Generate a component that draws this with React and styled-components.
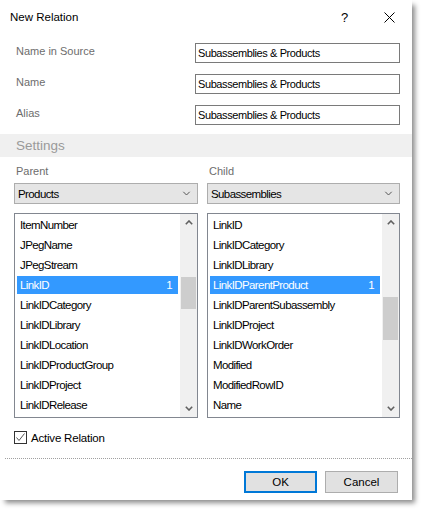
import React from 'react';
import styled, { createGlobalStyle } from 'styled-components';

const GlobalStyle = createGlobalStyle`
  body {
    margin: 0;
    background: #ffffff;
    font-family: "Liberation Sans", Arial, sans-serif;
  }
`;

// the dialog uses a narrow UI face for its controls
const controlFont = `
  font-family: "Liberation Sans", Arial, sans-serif;
  font-size: 11.5px;
  letter-spacing: -0.6px;
`;

const Page = styled.div`
  width: 421px;
  height: 509px;
  overflow: hidden;
`;

const Window = styled.div`
  width: 412px;
  height: 500px;
  background: #ffffff;
  box-shadow: 4px 4px 5px -1px rgba(0, 0, 0, 0.45);
  display: flex;
  flex-direction: column;
`;

const TitleBar = styled.div`
  height: 34px;
  display: flex;
  align-items: center;
  padding-left: 10px;
`;

const Title = styled.div`
  flex: 1;
  font-size: 11.5px;
  color: #000;
`;

const CaptionButton = styled.div`
  width: 45px;
  height: 34px;
  display: flex;
  align-items: center;
  justify-content: center;
  font-size: 13px;
  color: #000;
`;

const Fields = styled.div`
  display: grid;
  grid-template-columns: 179px 205px;
  row-gap: 11px;
  padding: 9px 0 0 16px;
`;

const FieldLabel = styled.div`
  height: 20px;
  line-height: 17px;
  font-size: 11px;
  color: #6d6d6d;
`;

const TextBox = styled.div`
  height: 20px;
  box-sizing: border-box;
  border: 1px solid #7a7a7a;
  padding: 0 2px;
  line-height: 18px;
  ${controlFont}
  font-size: 11px;
  letter-spacing: -0.4px;
  color: #000;
`;

const SettingsBand = styled.div`
  margin-top: 9px;
  height: 23px;
  background: #f0f0f0;
  padding-left: 16px;
  line-height: 23px;
  font-size: 13.5px;
  color: #9a9a9a;
`;

const Columns = styled.div`
  display: flex;
  gap: 9px;
  padding: 5px 0 0 14px;
`;

const Column = styled.div`
  width: ${(p) => p.width}px;
  display: flex;
  flex-direction: column;
`;

const ColumnLabel = styled.div`
  height: 18px;
  line-height: 18px;
  padding-left: 2px;
  font-size: 11px;
  color: #6d6d6d;
`;

const Select = styled.div`
  margin-top: 3px;
  height: 21px;
  box-sizing: border-box;
  border: 1px solid #adadad;
  background: #e5e5e5;
  display: flex;
  align-items: center;
  padding: 0 6px 0 3px;
  ${controlFont}
  color: #000;
`;

const SelectText = styled.span`
  flex: 1;
`;

const ListBox = styled.div`
  margin-top: 9px;
  height: 205px;
  box-sizing: border-box;
  border: 1px solid #828790;
  display: flex;
  overflow: hidden;
`;

const Items = styled.div`
  flex: 1;
  padding: 2px 2px 0 2px;
`;

const Item = styled.div`
  height: 18px;
  margin-bottom: 2px;
  display: flex;
  align-items: center;
  padding: 0 6px 0 3px;
  ${controlFont}
  color: ${(p) => (p.selected ? '#ffffff' : '#000000')};
  background: ${(p) => (p.selected ? '#3399ff' : 'transparent')};
`;

const ItemName = styled.span`
  flex: 1;
  white-space: nowrap;
`;

const ScrollBar = styled.div`
  width: 17px;
  background: #f0f0f0;
  display: flex;
  flex-direction: column;
`;

const ScrollArrow = styled.div`
  height: 17px;
  display: flex;
  align-items: center;
  justify-content: center;
`;

const Track = styled.div`
  flex: 1;
  display: flex;
  justify-content: center;
`;

const Thumb = styled.div`
  width: 15px;
  background: #cdcdcd;
`;

const CheckRow = styled.div`
  margin: 13px 0 0 14px;
  height: 13px;
  display: flex;
  align-items: center;
  gap: 4px;
  font-size: 11.5px;
  letter-spacing: -0.2px;
  color: #000;
`;

const CheckBox = styled.div`
  width: 13px;
  height: 13px;
  box-sizing: border-box;
  border: 1px solid #333333;
  background: #fff;
  display: flex;
  align-items: center;
  justify-content: center;
`;

const Divider = styled.div`
  margin: 14px 0 0 5px;
  border-top: 1px dotted #a0a0a0;
`;

const ButtonRow = styled.div`
  display: flex;
  justify-content: flex-end;
  gap: 8px;
  padding: 12px 14px 0 0;
`;

const Button = styled.div`
  width: 73px;
  height: 22px;
  box-sizing: border-box;
  background: #e1e1e1;
  border: ${(p) => (p.primary ? '2px solid #0078d7' : '1px solid #adadad')};
  display: flex;
  align-items: center;
  justify-content: center;
  font-size: 11.5px;
  color: #000;
`;

const Chevron = ({ up, color = '#606060', w = 8, h = 5, sw = 1.6 }) => (
  <svg width={w} height={h} viewBox="0 0 8 5">
    <polyline
      points={up ? '0.8,4.2 4,1 7.2,4.2' : '0.8,0.8 4,4 7.2,0.8'}
      fill="none"
      stroke={color}
      strokeWidth={sw}
    />
  </svg>
);

const parentItems = [
  'ItemNumber',
  'JPegName',
  'JPegStream',
  'LinkID',
  'LinkIDCategory',
  'LinkIDLibrary',
  'LinkIDLocation',
  'LinkIDProductGroup',
  'LinkIDProject',
  'LinkIDRelease',
];

const childItems = [
  'LinkID',
  'LinkIDCategory',
  'LinkIDLibrary',
  'LinkIDParentProduct',
  'LinkIDParentSubassembly',
  'LinkIDProject',
  'LinkIDWorkOrder',
  'Modified',
  'ModifiedRowID',
  'Name',
];

const FieldList = ({ items, selected, thumbTop, thumbHeight }) => (
  <ListBox>
    <Items>
      {items.map((name, i) => (
        <Item key={name} selected={i === selected}>
          <ItemName>{name}</ItemName>
          {i === selected && <span>1</span>}
        </Item>
      ))}
    </Items>
    <ScrollBar>
      <ScrollArrow>
        <Chevron up />
      </ScrollArrow>
      <Track>
        <Thumb style={{ marginTop: thumbTop, height: thumbHeight }} />
      </Track>
      <ScrollArrow>
        <Chevron />
      </ScrollArrow>
    </ScrollBar>
  </ListBox>
);

const fields = ['Name in Source', 'Name', 'Alias'];

export default function App() {
  return (
    <Page>
      <GlobalStyle />
      <Window>
        <TitleBar>
          <Title>New Relation</Title>
          <CaptionButton>?</CaptionButton>
          <CaptionButton>
            <svg width="11" height="11" viewBox="0 0 11 11">
              <path d="M0.5 0.5 L10.5 10.5 M10.5 0.5 L0.5 10.5" stroke="#000" strokeWidth="1" />
            </svg>
          </CaptionButton>
        </TitleBar>

        <Fields>
          {fields.map((f) => (
            <React.Fragment key={f}>
              <FieldLabel>{f}</FieldLabel>
              <TextBox>Subassemblies &amp; Products</TextBox>
            </React.Fragment>
          ))}
        </Fields>

        <SettingsBand>Settings</SettingsBand>

        <Columns>
          <Column width={184}>
            <ColumnLabel>Parent</ColumnLabel>
            <Select>
              <SelectText>Products</SelectText>
              <Chevron color="#555" w={9} h={5} sw={1} />
            </Select>
            <FieldList items={parentItems} selected={3} thumbTop={46} thumbHeight={32} />
          </Column>
          <Column width={193}>
            <ColumnLabel>Child</ColumnLabel>
            <Select>
              <SelectText>Subassemblies</SelectText>
              <Chevron color="#555" w={9} h={5} sw={1} />
            </Select>
            <FieldList items={childItems} selected={3} thumbTop={66} thumbHeight={43} />
          </Column>
        </Columns>

        <CheckRow>
          <CheckBox>
            <svg width="11" height="11" viewBox="0 0 11 11">
              <polyline points="1.5,5.5 4,8.5 9.5,1.5" fill="none" stroke="#555" strokeWidth="1" />
            </svg>
          </CheckBox>
          Active Relation
        </CheckRow>

        <Divider />

        <ButtonRow>
          <Button primary>OK</Button>
          <Button>Cancel</Button>
        </ButtonRow>
      </Window>
    </Page>
  );
}
